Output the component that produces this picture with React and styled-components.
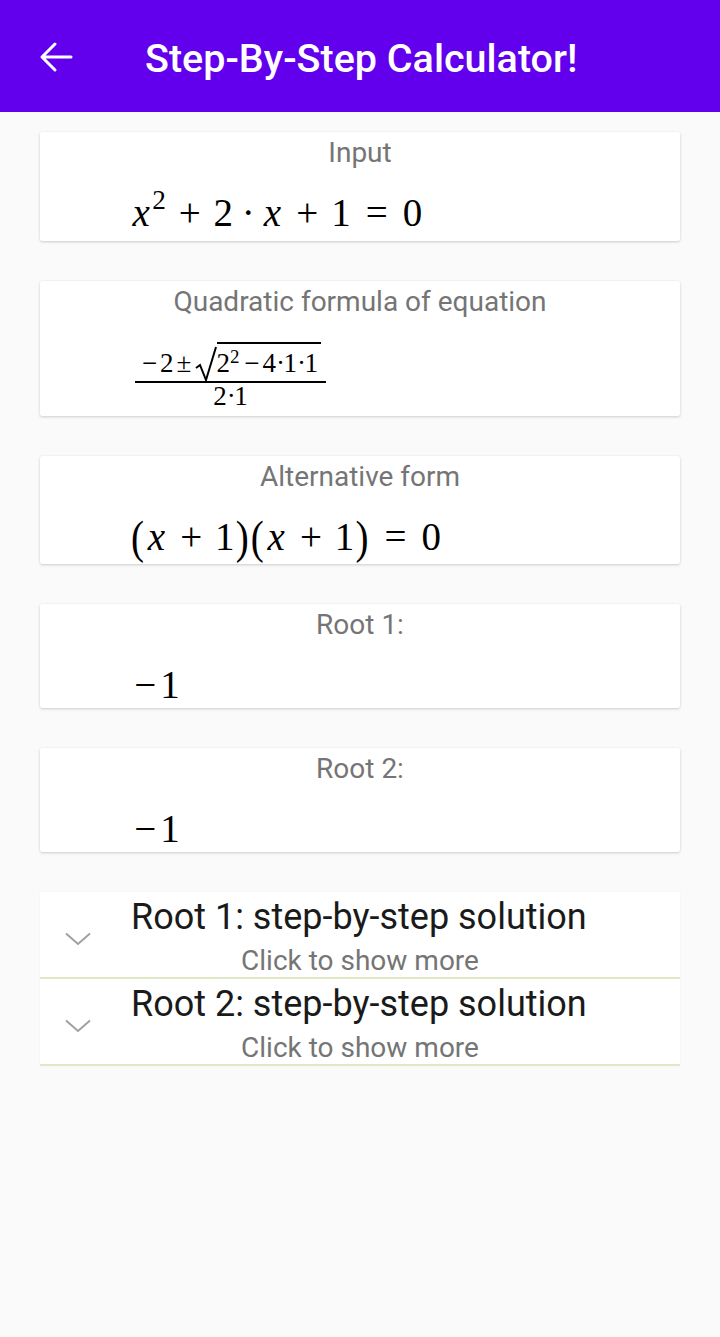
import React from "react";
import styled, { createGlobalStyle } from "styled-components";

const Global = createGlobalStyle`
  html, body { margin: 0; padding: 0; background: #fafafa; }
  body { font-family: Roboto, "Noto Sans", sans-serif; }
  * { box-sizing: border-box; }
`;

const Page = styled.div`
  min-height: 1337px;
  background: #fafafa;
`;

const AppBar = styled.header`
  height: 112px;
  background: #6200ee;
  display: flex;
  align-items: center;
  padding-left: 39px;
`;

const BackIcon = styled.svg`
  width: 34px;
  height: 32px;
  flex: none;
  margin-top: 2px;
`;

const AppTitle = styled.h1`
  margin: 6px 0 0 72px;
  color: #fff;
  font-family: Roboto, sans-serif;
  font-weight: 500;
  font-size: 39.5px;
  line-height: 46px;
`;

const Main = styled.main`
  padding: 20px 40px 0;
  display: flex;
  flex-direction: column;
  gap: 40px;
`;

const Card = styled.section`
  background: #fff;
  border-radius: 2px;
  box-shadow: 0 1px 3px rgba(0, 0, 0, 0.18), 0 0 1px rgba(0, 0, 0, 0.08);
  padding: 6px 0 ${(p) => p.$pb || 0}px;
`;

const CardTitle = styled.div`
  text-align: center;
  font-family: Roboto, sans-serif;
  font-size: 28px;
  line-height: 30px;
  color: #757575;
`;

const MathLine = styled.div`
  margin-top: 22px;
  padding-left: 90px;
  height: 46px;
  line-height: 46px;
  font-family: "Liberation Serif", "Times New Roman", serif;
  font-size: 39px;
  color: #000;
  white-space: nowrap;
`;

const Var = styled.i`
  font-style: italic;
  display: inline-block;
  width: 0.572em;
  text-align: center;
`;

const Sym = styled.span`
  display: inline-block;
  width: ${(p) => p.$w}em;
  margin: 0 ${(p) => p.$m || 0}em;
  text-align: center;
`;

const Paren = styled.span`
  display: inline-block;
  width: 0.389em;
  text-align: center;
  transform: scaleY(1.2);
`;

const Sup = styled.sup`
  font-size: 0.7em;
  line-height: 0;
  vertical-align: 0.62em;
  display: inline-block;
  width: 0.5em;
`;

const FracWrap = styled.div`
  margin-top: 25px;
  padding-left: 95px;
  padding-bottom: 7px;
`;

const Fraction = styled.div`
  display: inline-flex;
  flex-direction: column;
  align-items: center;
  font-family: "Liberation Serif", "Times New Roman", serif;
  font-size: 27px;
  color: #000;
`;

const Numerator = styled.div`
  display: flex;
  align-items: flex-end;
  padding: 0 5px 0 4px;
  line-height: 27px;
  white-space: nowrap;
`;

const RadicalSign = styled.svg`
  width: 22px;
  height: 37px;
  flex: none;
  margin-bottom: -6px;
`;

const Radicand = styled.span`
  border-top: 2px solid #000;
  padding-top: 6px;
  padding-right: 3px;
`;

const SmallSup = styled.sup`
  font-size: 0.7em;
  line-height: 0;
  vertical-align: 0.5em;
  margin-right: 2px;
`;

const FracBar = styled.div`
  align-self: stretch;
  height: 2px;
  background: #000;
  margin-top: 4px;
`;

const Denominator = styled.div`
  line-height: 25px;
  margin-top: 1px;
`;

const Accordion = styled.div`
  background: #fff;
  box-shadow: 0 0 1px rgba(0, 0, 0, 0.08);
`;

const AccItem = styled.div`
  display: grid;
  grid-template-columns: 91px 1fr;
  padding: 4px 0 1px;
  border-bottom: 2px solid #dfe8c2;
  cursor: pointer;
`;

const Chevron = styled.svg`
  grid-column: 1;
  grid-row: 1 / 3;
  align-self: center;
  margin-left: 25px;
  margin-top: 6px;
  width: 26px;
  height: 14px;
`;

const AccTitle = styled.div`
  grid-column: 2;
  grid-row: 1;
  font-family: Roboto, sans-serif;
  font-size: 36px;
  line-height: 42px;
  color: #1a1a1a;
`;

const AccSub = styled.div`
  grid-column: 1 / -1;
  grid-row: 2;
  margin-top: 8px;
  text-align: center;
  font-family: Roboto, sans-serif;
  font-size: 28px;
  line-height: 30px;
  color: #757575;
`;

function Root({ label }) {
  return (
    <Card>
      <CardTitle>{label}</CardTitle>
      <MathLine>
        <Sym $w={0.778}>−</Sym>1
      </MathLine>
    </Card>
  );
}

function AccordionRow({ title }) {
  return (
    <AccItem>
      <Chevron viewBox="0 0 26 14">
        <polyline points="1,1.5 13,12 25,1.5" fill="none" stroke="#a0a0a0" strokeWidth="2" />
      </Chevron>
      <AccTitle>{title}</AccTitle>
      <AccSub>Click to show more</AccSub>
    </AccItem>
  );
}

export default function App() {
  return (
    <Page>
      <Global />
      <AppBar>
        <BackIcon viewBox="0 0 34 32">
          <path d="M32 16H3M16 3L3 16L16 29" fill="none" stroke="#fff" strokeWidth="3" strokeLinecap="round" strokeLinejoin="round" />
        </BackIcon>
        <AppTitle>Step-By-Step Calculator!</AppTitle>
      </AppBar>
      <Main>
        <Card $pb={5}>
          <CardTitle>Input</CardTitle>
          <MathLine>
            <Var>x</Var>
            <Sup>2</Sup>
            <Sym $w={0.778} $m={0.222}>+</Sym>2
            <Sym $w={0.278} $m={0.222}>·</Sym>
            <Var>x</Var>
            <Sym $w={0.778} $m={0.222}>+</Sym>1
            <Sym $w={0.778} $m={0.278}>=</Sym>0
          </MathLine>
        </Card>

        <Card>
          <CardTitle>Quadratic formula of equation</CardTitle>
          <FracWrap>
            <Fraction>
              <Numerator>
                <Sym $w={0.778}>−</Sym>2<Sym $w={0.778}>±</Sym>
                <RadicalSign viewBox="0 0 22 37">
                  <path d="M1 22L5 19L11 34L21 1" fill="none" stroke="#000" strokeWidth="2" strokeLinejoin="miter" />
                </RadicalSign>
                <Radicand>
                  2<SmallSup>2</SmallSup>
                  <Sym $w={0.778}>−</Sym>4<Sym $w={0.278}>·</Sym>1<Sym $w={0.278}>·</Sym>1
                </Radicand>
              </Numerator>
              <FracBar />
              <Denominator>
                2<Sym $w={0.278}>·</Sym>1
              </Denominator>
            </Fraction>
          </FracWrap>
        </Card>

        <Card $pb={4}>
          <CardTitle>Alternative form</CardTitle>
          <MathLine>
            <Paren>(</Paren>
            <Var>x</Var>
            <Sym $w={0.778} $m={0.222}>+</Sym>1<Paren>)</Paren>
            <Paren>(</Paren>
            <Var>x</Var>
            <Sym $w={0.778} $m={0.222}>+</Sym>1<Paren>)</Paren>
            <Sym $w={0.778} $m={0.278}>=</Sym>0
          </MathLine>
        </Card>

        <Root label="Root 1:" />
        <Root label="Root 2:" />

        <Accordion>
          <AccordionRow title="Root 1: step-by-step solution" />
          <AccordionRow title="Root 2: step-by-step solution" />
        </Accordion>
      </Main>
    </Page>
  );
}
